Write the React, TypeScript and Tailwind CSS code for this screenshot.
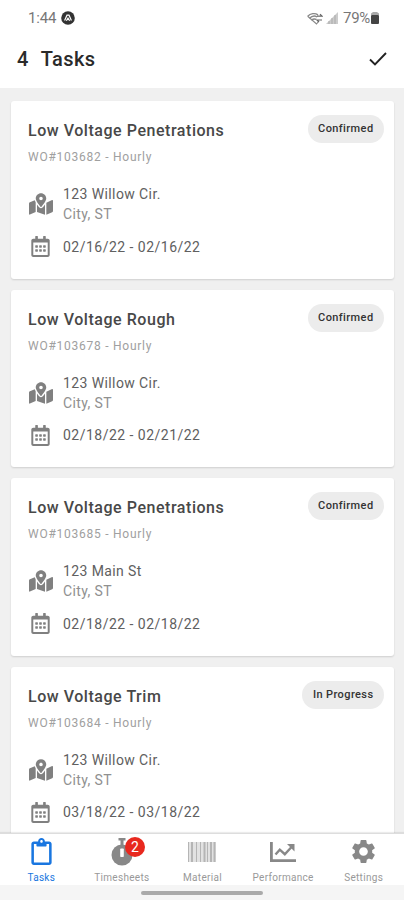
import React from 'react';
import { clsx } from 'clsx';
import { FaMapMarkedAlt, FaRegCalendarAlt, FaRegClipboard } from 'react-icons/fa';
import { MdSettings } from 'react-icons/md';

interface Task {
  title: string;
  order: string;
  street: string;
  dates: string;
  status: string;
}

const tasks: Task[] = [
  {
    title: 'Low Voltage Penetrations',
    order: 'WO#103682 - Hourly',
    street: '123 Willow Cir.',
    dates: '02/16/22 - 02/16/22',
    status: 'Confirmed',
  },
  {
    title: 'Low Voltage Rough',
    order: 'WO#103678 - Hourly',
    street: '123 Willow Cir.',
    dates: '02/18/22 - 02/21/22',
    status: 'Confirmed',
  },
  {
    title: 'Low Voltage Penetrations',
    order: 'WO#103685 - Hourly',
    street: '123 Main St',
    dates: '02/18/22 - 02/18/22',
    status: 'Confirmed',
  },
  {
    title: 'Low Voltage Trim',
    order: 'WO#103684 - Hourly',
    street: '123 Willow Cir.',
    dates: '03/18/22 - 03/18/22',
    status: 'In Progress',
  },
];

function StopwatchIcon() {
  return (
    <svg viewBox="0 0 24 28" className="h-7 w-6">
      <path d="M8.5 1h7M12 1v6M19 6l2 2" stroke="currentColor" strokeWidth="3" />
      <circle cx="12" cy="17" r="10.5" fill="currentColor" />
      <rect x="10.2" y="10.5" width="3.6" height="8.5" rx="0.8" fill="#fff" />
    </svg>
  );
}

function BarcodeIcon() {
  return (
    <svg viewBox="0 0 28 20" className="h-5 w-7" stroke="#b5b5b5">
      <rect width="28" height="20" fill="#e2e2e2" stroke="none" />
      <path d="M.5 0v20M8.5 0v20M12.5 0v20M19.5 0v20" />
      <path d="M4 0v20M16.5 0v20M23 0v20M26.5 0v20" strokeWidth="2" />
    </svg>
  );
}

function ChartIcon() {
  return (
    <svg viewBox="0 0 26 20" className="h-5 w-[26px]" fill="none" stroke="currentColor">
      <path d="M1.4 0v18.6H26" strokeWidth="2.8" />
      <path d="m5.5 12.5 4.3-4.8 5 4.5L22 4.5" strokeWidth="2.4" />
      <path d="M17 2h7.5v7.5z" fill="currentColor" stroke="none" />
    </svg>
  );
}

function StatusBar() {
  return (
    <div className="flex h-9 items-center justify-between pl-7 pr-[25px] text-[#777]">
      <div className="flex items-center gap-[5px]">
        <span className="text-[15px] leading-none tracking-[-0.2px]">1:44</span>
        <svg viewBox="0 0 14 14" className="size-3.5">
          <circle cx="7" cy="7" r="6.8" fill="#333" />
          <path d="M3.6 9.6 6 4.2h2l2.4 5.4M5.4 9.8 7 7.2l1.6 2.6" fill="none" stroke="#fff" strokeWidth="1.2" />
        </svg>
      </div>
      <div className="flex items-center">
        <svg viewBox="0 0 16 13" className="mr-[3px] h-[13px] w-4" fill="none" stroke="#888">
          <path d="M.5 4.5C3.5 1.2 8 .8 11 2.8M2.5 6.3C5 3.8 8 3.6 10.2 5M4.5 8.2c1.6-1.4 3.2-1.6 4.8-.8" strokeWidth="1.4" />
          <path d="M1 4.5 9.5 12l2-2.5" strokeWidth="1.2" />
          <path d="M10 4.2h5l-2-2M15 8h-5l2 2" stroke="#666" strokeWidth="1.2" />
        </svg>
        <svg viewBox="0 0 12 12" className="mr-[5px] size-3">
          <path d="M0 12 12 0v12z" fill="#ccc" />
          <path d="M3 9v3M6 6v6M9 3v9" stroke="#aaa" strokeWidth="1" />
        </svg>
        <span className="text-[15px] leading-none tracking-[-0.3px]">79%</span>
        <svg viewBox="0 0 8 12" className="ml-px h-3 w-2">
          <path d="M2 0h4l2 1.5V3H0V1.5z" fill="#aaa" />
          <rect y="3" width="8" height="9" rx="1" fill="#444" />
        </svg>
      </div>
    </div>
  );
}

function Header({ count }: { count: number }) {
  return (
    <header className="flex h-[52px] items-center justify-between pb-[7px] pl-[17px] pr-[17px] text-xl font-medium text-[#2a2a2a]">
      <h1 className="flex gap-3 leading-none tracking-[0.4px]">
        <span>{count}</span>
        <span>Tasks</span>
      </h1>
      <svg viewBox="0 0 18 14" className="h-3.5 w-[18px]">
        <path d="M1 7.5 6 12.5 17 1" fill="none" stroke="#222" strokeWidth="1.9" />
      </svg>
    </header>
  );
}

function TaskCard({ task }: { task: Task }) {
  return (
    <article className="h-[177.6px] shrink-0 rounded-[3px] bg-white pl-[17px] pr-2.5 pt-3.5 shadow-[0_1px_2px_rgba(0,0,0,0.14)]">
      <div className="flex items-start justify-between">
        <div>
          <h2 className="pt-1.5 text-base leading-5 font-medium tracking-[0.54px] text-[#484848]">{task.title}</h2>
          <p className="mt-2 text-xs leading-4 tracking-[0.75px] text-[#a0a0a0]">{task.order}</p>
        </div>
        <span className="flex h-7 items-center rounded-full bg-[#ececec] px-[10.5px] pt-px text-[11px] font-medium tracking-[0.4px] text-[#333]">
          {task.status}
        </span>
      </div>
      <div className="mt-[19px] flex items-center">
        <FaMapMarkedAlt className="ml-px h-[22px] w-6 text-[#808080]" />
        <div className="ml-2.5 text-sm leading-5 tracking-[0.4px]">
          <p className="text-[#606060]">{task.street}</p>
          <p className="text-[#909090]">City, ST</p>
        </div>
      </div>
      <div className="mt-3 flex items-center">
        <FaRegCalendarAlt className="ml-[3px] h-[21px] w-[19px] text-[#808080]" />
        <p className="ml-[13px] text-sm leading-5 tracking-[0.48px] text-[#606060]">{task.dates}</p>
      </div>
    </article>
  );
}

interface TabProps {
  label: string;
  active?: boolean;
  badge?: number;
  children: React.ReactNode;
}

function Tab({ label, active, badge, children }: TabProps) {
  return (
    <div className={clsx('flex flex-1 flex-col items-center', active ? 'text-[#1976e0]' : 'text-[#888]')}>
      <div className="relative flex h-[37px] items-center justify-center">
        {children}
        {badge && (
          <span className="absolute left-[15px] top-[3px] flex size-5 items-center justify-center rounded-full bg-[#e8281e] text-sm text-white">
            {badge}
          </span>
        )}
      </div>
      <span className={clsx('pt-0.5 text-[10px] leading-[14px] tracking-[0.3px]', !active && 'text-[#999]')}>{label}</span>
    </div>
  );
}

function TabBar() {
  return (
    <nav className="flex h-[52px] shrink-0 border-t border-[#ddd] bg-white pl-px shadow-[0_-1px_1px_rgba(0,0,0,0.08)]">
      <Tab label="Tasks" active>
        <FaRegClipboard className="h-[27px] w-[21px]" />
      </Tab>
      <Tab label="Timesheets" badge={2}>
        <StopwatchIcon />
      </Tab>
      <Tab label="Material">
        <BarcodeIcon />
      </Tab>
      <Tab label="Performance">
        <ChartIcon />
      </Tab>
      <Tab label="Settings">
        <MdSettings className="size-[29px]" />
      </Tab>
    </nav>
  );
}

export default function App() {
  return (
    <div className="flex h-[900px] w-[404px] flex-col overflow-hidden bg-white font-['Roboto',sans-serif]">
      <StatusBar />
      <Header count={tasks.length} />
      <main className="flex min-h-0 flex-1 flex-col gap-[11px] overflow-hidden bg-[#f0f0f0] pl-[11px] pr-[10px] pt-[13px]">
        {tasks.map((task) => (
          <TaskCard key={task.order} task={task} />
        ))}
      </main>
      <TabBar />
      <div className="flex h-[15px] shrink-0 justify-center bg-[#f5f5f5] pt-1.5">
        <div className="h-1 w-[122px] rounded-full bg-[#aaa]" />
      </div>
    </div>
  );
}
